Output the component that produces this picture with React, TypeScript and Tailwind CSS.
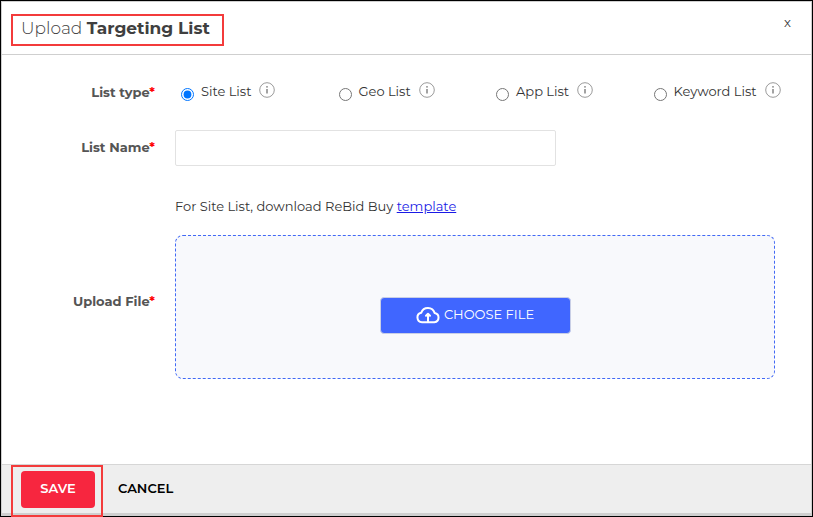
import { useState } from "react";

const listTypes = ["Site List", "Geo List", "App List", "Keyword List"];

function InfoIcon() {
  return (
    <svg viewBox="0 0 16 16" className="h-4 w-4 shrink-0" fill="none" aria-hidden="true">
      <circle cx="8" cy="8" r="7.3" stroke="#8f8f8f" strokeWidth="0.9" />
      <path d="M8 7v4.6" stroke="#858585" strokeWidth="1.5" />
      <circle cx="8" cy="4.8" r="0.9" fill="#858585" />
    </svg>
  );
}

function CloudUploadIcon() {
  return (
    <svg
      viewBox="0 0 24 18"
      className="h-[18px] w-6 shrink-0"
      fill="none"
      stroke="currentColor"
      strokeWidth="2"
      strokeLinecap="round"
      strokeLinejoin="round"
      aria-hidden="true"
    >
      <path d="M6 16.2a4.8 4.8 0 0 1-.7-9.5A7 7 0 0 1 18.6 6.9 4.7 4.7 0 0 1 18.4 16.2Z" />
      <path d="M12 15.5V9" />
      <path d="M10 9.8 12 7.8l2 2" />
    </svg>
  );
}

function Required() {
  return <span className="text-[#f00]">*</span>;
}

export default function App() {
  const [selected, setSelected] = useState("Site List");
  const [name, setName] = useState("");

  return (
    <div className="flex min-h-screen flex-col border border-black bg-white font-['Montserrat','Inter',sans-serif] text-[13px] text-[#333]">
      <div className="flex flex-1 flex-col border border-[#cfcfcf]">
        <header className="flex h-[53px] items-center justify-between border-b border-[#cfcfcf] pr-4 pl-[9px]">
          <h1 className="mt-1 flex h-8 items-center border-2 border-[#f33b3b] pr-3 pl-2 pb-1 text-[17px] leading-6 font-light whitespace-pre text-[#3f3f3f]">
            Upload <strong className="font-bold">Targeting List</strong>
          </h1>
          <button type="button" aria-label="Close" className="mb-3 px-1 leading-4">
            x
          </button>
        </header>

        <main className="flex-1 pt-[26px] pb-8">
          <div role="radiogroup" aria-labelledby="list-type" className="flex h-6 items-center">
            <div id="list-type" className="w-[173px] shrink-0 pr-5 text-right font-bold text-[#555]">
              List type
              <Required />
            </div>
            <div className="mr-1.5 grid flex-1 grid-cols-4">
              {listTypes.map((type) => (
                <label key={type} className="flex items-center pb-0.5 pl-1.5 whitespace-nowrap">
                  <input
                    type="radio"
                    name="listType"
                    checked={selected === type}
                    onChange={() => setSelected(type)}
                    className="mt-1 mr-[7px] h-[13px] w-[13px]"
                  />
                  {type}
                  <span className="mb-1 ml-2">
                    <InfoIcon />
                  </span>
                </label>
              ))}
            </div>
          </div>

          <div className="mt-[25px] flex items-center">
            <label htmlFor="list-name" className="w-[173px] shrink-0 pr-5 text-right font-bold text-[#555]">
              List Name
              <Required />
            </label>
            <input
              id="list-name"
              type="text"
              value={name}
              onChange={(e) => setName(e.target.value)}
              className="h-9 w-[381px] rounded-xs border border-[#e2e2e2] px-3 outline-none"
            />
          </div>

          <p className="mt-[30px] pl-[173px] leading-5">
            For Site List, download ReBid Buy{" "}
            <a href="#template" className="text-[#1a1ae6] underline">
              template
            </a>
          </p>

          <div className="mt-[19px] flex items-center">
            <div id="upload-file" className="w-[173px] shrink-0 pr-5 pb-2.5 text-right font-bold text-[#555]">
              Upload File
              <Required />
            </div>
            <div className="mr-9 flex h-36 flex-1 items-center justify-center rounded-lg border border-dashed border-[#4169f5] bg-[#f8f9fc] pt-4">
              <button
                type="button"
                aria-describedby="upload-file"
                className="flex h-[37px] w-[191px] items-center justify-center gap-1 rounded-sm border border-[#c9cfe6] bg-[#4066ff] text-white"
              >
                <CloudUploadIcon />
                CHOOSE FILE
              </button>
            </div>
          </div>
        </main>

        <footer className="flex h-[49px] items-center border-t border-[#d6d6d6] bg-[#eee] pl-[19px]">
          <div className="relative">
            <button
              type="button"
              className="block h-[37px] w-[74px] rounded bg-[#f7263f] font-semibold text-white"
            >
              SAVE
            </button>
            <span className="pointer-events-none absolute -top-1.5 -right-2 -bottom-[9px] -left-2.5 border-2 border-[#f33b3b]" />
          </div>
          <button type="button" className="ml-[23px] font-semibold text-black">
            CANCEL
          </button>
        </footer>
        <div className="h-0.5 bg-[#cfcfcf]" />
      </div>
    </div>
  );
}
